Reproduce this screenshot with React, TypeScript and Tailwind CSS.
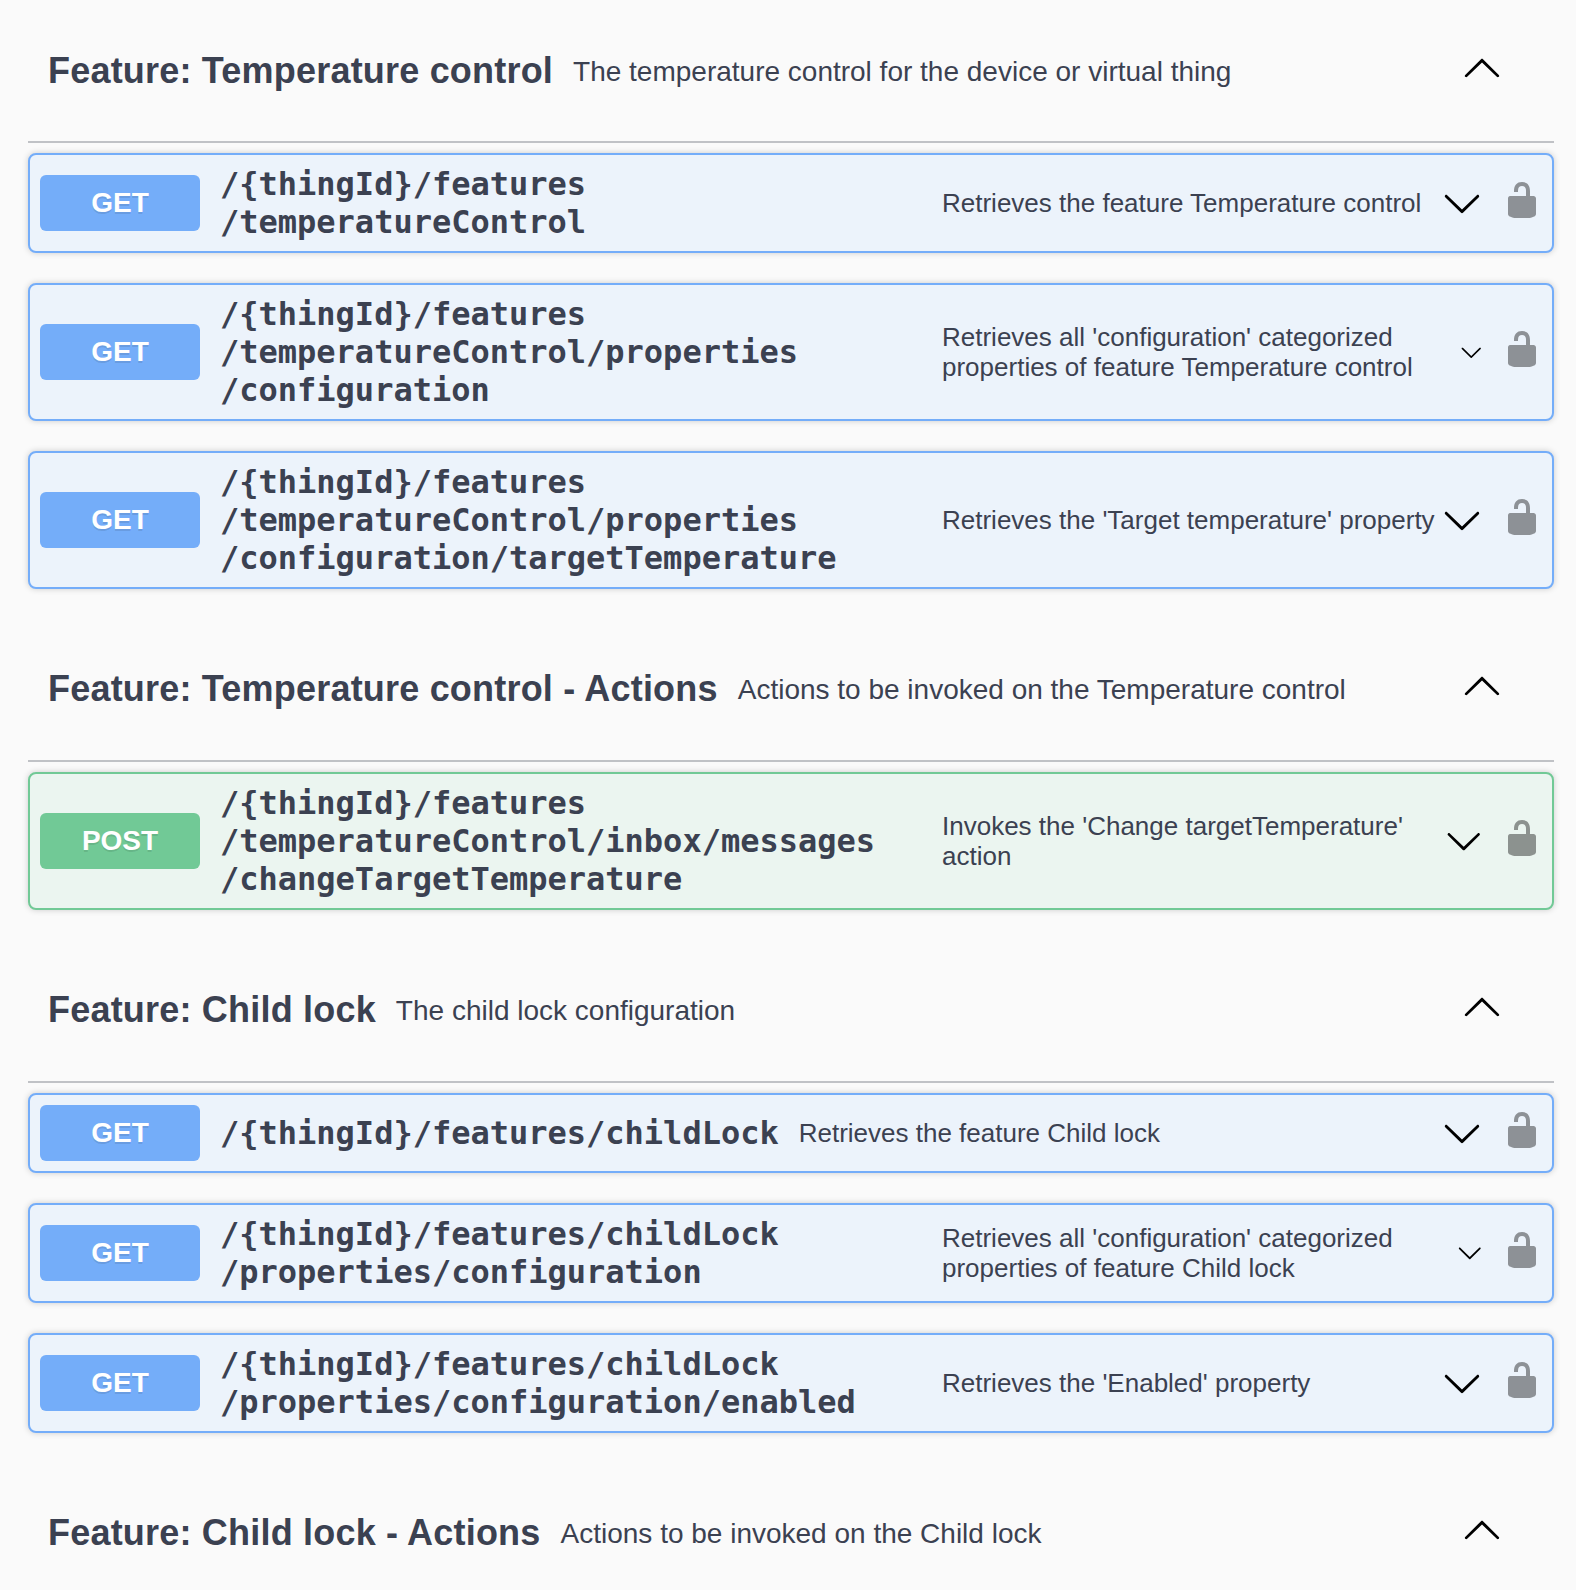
type Method = "GET" | "POST";

type Operation = {
  method: Method;
  path: string[];
  summary: string[];
  arrow: number;
};

type Section = {
  title: string;
  description: string;
  operations: Operation[];
};

const sections: Section[] = [
  {
    title: "Feature: Temperature control",
    description: "The temperature control for the device or virtual thing",
    operations: [
      {
        method: "GET",
        path: ["/{thingId}/features", "/temperatureControl"],
        summary: ["Retrieves the feature Temperature control"],
        arrow: 40,
      },
      {
        method: "GET",
        path: ["/{thingId}/features", "/temperatureControl/properties", "/configuration"],
        summary: ["Retrieves all 'configuration' categorized", "properties of feature Temperature control"],
        arrow: 22.5,
      },
      {
        method: "GET",
        path: ["/{thingId}/features", "/temperatureControl/properties", "/configuration/targetTemperature"],
        summary: ["Retrieves the 'Target temperature' property"],
        arrow: 40,
      },
    ],
  },
  {
    title: "Feature: Temperature control - Actions",
    description: "Actions to be invoked on the Temperature control",
    operations: [
      {
        method: "POST",
        path: ["/{thingId}/features", "/temperatureControl/inbox/messages", "/changeTargetTemperature"],
        summary: ["Invokes the 'Change targetTemperature'", "action"],
        arrow: 37.5,
      },
    ],
  },
  {
    title: "Feature: Child lock",
    description: "The child lock configuration",
    operations: [
      {
        method: "GET",
        path: ["/{thingId}/features/childLock"],
        summary: ["Retrieves the feature Child lock"],
        arrow: 40,
      },
      {
        method: "GET",
        path: ["/{thingId}/features/childLock", "/properties/configuration"],
        summary: ["Retrieves all 'configuration' categorized", "properties of feature Child lock"],
        arrow: 25.5,
      },
      {
        method: "GET",
        path: ["/{thingId}/features/childLock", "/properties/configuration/enabled"],
        summary: ["Retrieves the 'Enabled' property"],
        arrow: 40,
      },
    ],
  },
  {
    title: "Feature: Child lock - Actions",
    description: "Actions to be invoked on the Child lock",
    operations: [],
  },
];

const cardStyle: Record<Method, string> = {
  GET: "border-[#74adf9] bg-[#ecf3fb]",
  POST: "border-[#71c996] bg-[#ebf5f0]",
};

const badgeStyle: Record<Method, string> = {
  GET: "bg-[#74adf9]",
  POST: "bg-[#71c996]",
};

function ArrowUp() {
  return (
    <svg viewBox="0 0 20 20" className="size-10 shrink-0" fill="#000">
      <path d="M17.418 14.908c.272.268.709.268.979 0s.271-.701 0-.969L10.489 6.109c-.27-.268-.707-.268-.979 0l-7.908 7.83c-.27.268-.27.701 0 .969.271.268.709.268.979 0L10 7.767l7.418 7.141z" />
    </svg>
  );
}

function ArrowDown({ size }: { size: number }) {
  return (
    <svg viewBox="0 0 20 20" width={size} height={size} className="shrink-0" fill="#000">
      <path d="M17.418 6.109c.272-.268.709-.268.979 0s.271.701 0 .969l-7.908 7.83c-.27.268-.707.268-.979 0l-7.908-7.83c-.27-.268-.271-.701 0-.969.271-.268.709-.268.979 0L10 13.25l7.418-7.141z" />
    </svg>
  );
}

function Unlocked() {
  return (
    <svg viewBox="0 0 20 20" className="mb-1.5 ml-5 size-10 shrink-0 opacity-40" fill="#000">
      <path d="M15.8 8H14V5.6C14 2.703 12.665 1 10 1 7.334 1 6 2.703 6 5.6V6h2v-.801C8 3.754 8.797 3 10 3c1.203 0 2 .754 2 2.199V8H4c-.553 0-1 .646-1 1.199V17c0 .549.428 1.139.951 1.307l1.197.387C5.672 18.861 6.55 19 7.1 19h5.8c.549 0 1.428-.139 1.951-.307l1.196-.387c.524-.167.953-.757.953-1.306V9.199C17 8.646 16.352 8 15.8 8z" />
    </svg>
  );
}

function OperationCard({ op }: { op: Operation }) {
  const multiline = op.path.length > 1;
  return (
    <div
      className={`mb-[30px] flex items-center rounded-lg border-2 p-2.5 shadow-[0_0_6px_rgba(0,0,0,0.19)] ${cardStyle[op.method]}`}
    >
      <span
        className={`flex h-14 w-40 shrink-0 items-center justify-center rounded-md text-[28px] font-bold text-white [text-shadow:0_2px_0_rgba(0,0,0,0.1)] ${badgeStyle[op.method]}`}
      >
        {op.method}
      </span>
      <span
        className={`shrink-0 px-5 font-['DejaVu_Sans_Mono',monospace] text-[32px] leading-[38px] font-bold whitespace-nowrap ${multiline ? "w-[742px]" : ""}`}
      >
        {op.path.map((line) => (
          <span key={line} className="block">
            {line}
          </span>
        ))}
      </span>
      <span className="grow text-[26px] leading-[30px] whitespace-nowrap">
        {op.summary.map((line) => (
          <span key={line} className="block">
            {line}
          </span>
        ))}
      </span>
      <ArrowDown size={op.arrow} />
      <Unlocked />
    </div>
  );
}

export default function App() {
  return (
    <div className="h-[1590px] overflow-hidden bg-[#fafafa] pr-[22px] pl-7 font-['Liberation_Sans',Arial,sans-serif] text-[#3b4151]">
      {sections.map((section, index) => (
        <section key={section.title}>
          <h3
            className={`mb-2.5 flex h-[143px] items-center border-b-2 border-[rgba(59,65,81,0.3)] pr-[52px] pl-5 ${index === 0 ? "pt-px" : "pb-px"}`}
          >
            <span className="text-[36px] font-bold tracking-[0.2px] whitespace-nowrap">{section.title}</span>
            <small className="grow px-5 pt-0.5 text-[28px] font-normal whitespace-nowrap">{section.description}</small>
            <span className="pb-2">
              <ArrowUp />
            </span>
          </h3>
          {section.operations.map((op) => (
            <OperationCard key={op.path.join("")} op={op} />
          ))}
        </section>
      ))}
    </div>
  );
}
